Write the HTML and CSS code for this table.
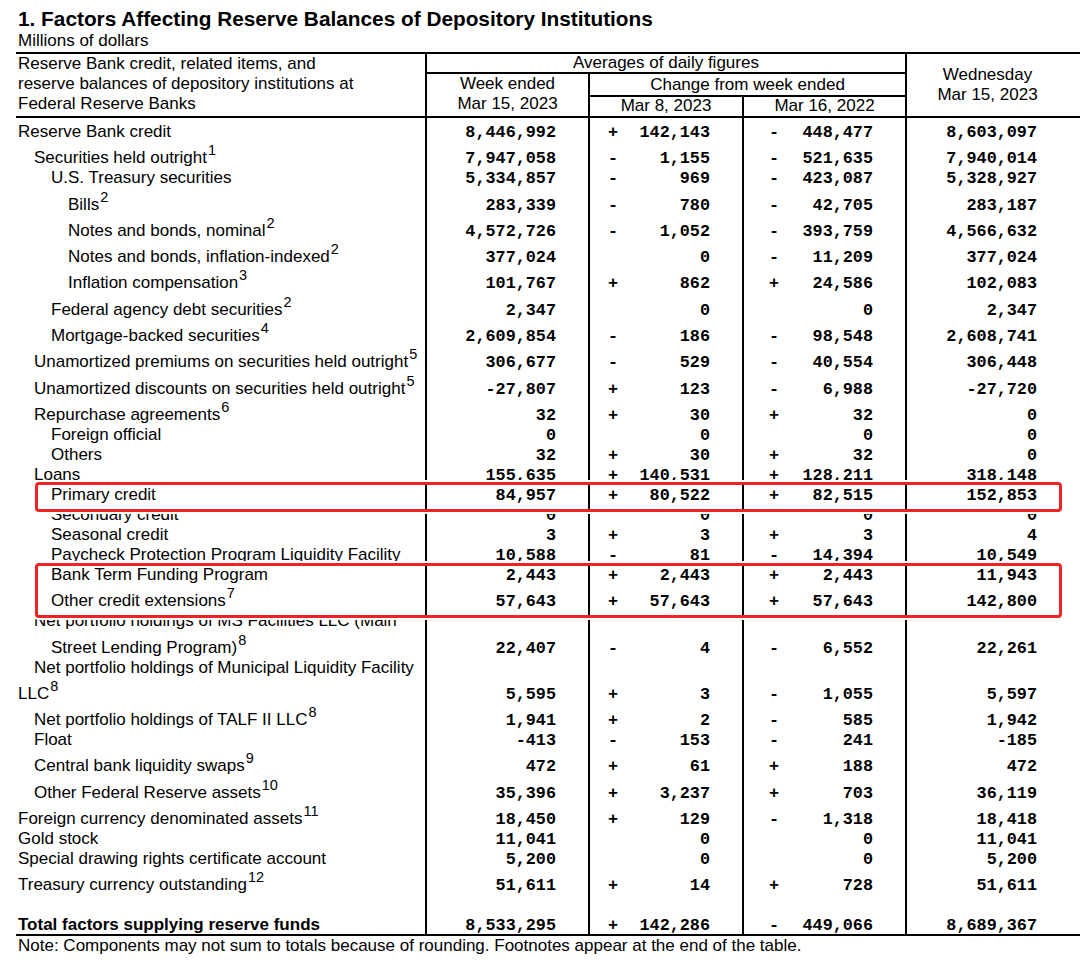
FILE: index.html
```html
<!DOCTYPE html>
<html lang="en">
<head>
<meta charset="utf-8">
<title>Factors Affecting Reserve Balances</title>
<link rel="stylesheet" href="styles.css">
</head>
<body>
<div class="page">
  <h1 class="title">1. Factors Affecting Reserve Balances of Depository Institutions</h1>
  <div class="units">Millions of dollars</div>
  <div class="table">
    <div class="thead">
      <div class="h-label">Reserve Bank credit, related items, and<br>reserve balances of depository institutions at<br>Federal Reserve Banks</div>
      <div class="h-avg">Averages of daily figures</div>
      <div class="h-week">Week ended<br>Mar 15, 2023</div>
      <div class="h-change">Change from week ended</div>
      <div class="h-mar8">Mar 8, 2023</div>
      <div class="h-mar16">Mar 16, 2022</div>
      <div class="h-wed"><span>Wednesday</span><span>Mar 15, 2023</span></div>
    </div>
    <div class="tbody">
      <div class="row first"><div class="lbl"><span>Reserve Bank credit</span></div><div class="c wk"><span>8,446,992</span></div><div class="c ch"><span>+</span><span>142,143</span></div><div class="c ch2"><span>-</span><span>448,477</span></div><div class="c wd"><span>8,603,097</span></div></div>
      <div class="row t"><div class="lbl l1"><span>Securities held outright<sup>1</sup></span></div><div class="c wk"><span>7,947,058</span></div><div class="c ch"><span>-</span><span>1,155</span></div><div class="c ch2"><span>-</span><span>521,635</span></div><div class="c wd"><span>7,940,014</span></div></div>
      <div class="row"><div class="lbl l2"><span>U.S. Treasury securities</span></div><div class="c wk"><span>5,334,857</span></div><div class="c ch"><span>-</span><span>969</span></div><div class="c ch2"><span>-</span><span>423,087</span></div><div class="c wd"><span>5,328,927</span></div></div>
      <div class="row t"><div class="lbl l3"><span>Bills<sup>2</sup></span></div><div class="c wk"><span>283,339</span></div><div class="c ch"><span>-</span><span>780</span></div><div class="c ch2"><span>-</span><span>42,705</span></div><div class="c wd"><span>283,187</span></div></div>
      <div class="row t"><div class="lbl l3"><span>Notes and bonds, nominal<sup>2</sup></span></div><div class="c wk"><span>4,572,726</span></div><div class="c ch"><span>-</span><span>1,052</span></div><div class="c ch2"><span>-</span><span>393,759</span></div><div class="c wd"><span>4,566,632</span></div></div>
      <div class="row t"><div class="lbl l3"><span>Notes and bonds, inflation-indexed<sup>2</sup></span></div><div class="c wk"><span>377,024</span></div><div class="c ch"><span></span><span>0</span></div><div class="c ch2"><span>-</span><span>11,209</span></div><div class="c wd"><span>377,024</span></div></div>
      <div class="row t"><div class="lbl l3"><span>Inflation compensation<sup>3</sup></span></div><div class="c wk"><span>101,767</span></div><div class="c ch"><span>+</span><span>862</span></div><div class="c ch2"><span>+</span><span>24,586</span></div><div class="c wd"><span>102,083</span></div></div>
      <div class="row t"><div class="lbl l2"><span>Federal agency debt securities<sup>2</sup></span></div><div class="c wk"><span>2,347</span></div><div class="c ch"><span></span><span>0</span></div><div class="c ch2"><span></span><span>0</span></div><div class="c wd"><span>2,347</span></div></div>
      <div class="row t"><div class="lbl l2"><span>Mortgage-backed securities<sup>4</sup></span></div><div class="c wk"><span>2,609,854</span></div><div class="c ch"><span>-</span><span>186</span></div><div class="c ch2"><span>-</span><span>98,548</span></div><div class="c wd"><span>2,608,741</span></div></div>
      <div class="row t"><div class="lbl l1"><span>Unamortized premiums on securities held outright<sup>5</sup></span></div><div class="c wk"><span>306,677</span></div><div class="c ch"><span>-</span><span>529</span></div><div class="c ch2"><span>-</span><span>40,554</span></div><div class="c wd"><span>306,448</span></div></div>
      <div class="row t"><div class="lbl l1"><span>Unamortized discounts on securities held outright<sup>5</sup></span></div><div class="c wk"><span>-27,807</span></div><div class="c ch"><span>+</span><span>123</span></div><div class="c ch2"><span>-</span><span>6,988</span></div><div class="c wd"><span>-27,720</span></div></div>
      <div class="row t"><div class="lbl l1"><span>Repurchase agreements<sup>6</sup></span></div><div class="c wk"><span>32</span></div><div class="c ch"><span>+</span><span>30</span></div><div class="c ch2"><span>+</span><span>32</span></div><div class="c wd"><span>0</span></div></div>
      <div class="row"><div class="lbl l2"><span>Foreign official</span></div><div class="c wk"><span>0</span></div><div class="c ch"><span></span><span>0</span></div><div class="c ch2"><span></span><span>0</span></div><div class="c wd"><span>0</span></div></div>
      <div class="row"><div class="lbl l2"><span>Others</span></div><div class="c wk"><span>32</span></div><div class="c ch"><span>+</span><span>30</span></div><div class="c ch2"><span>+</span><span>32</span></div><div class="c wd"><span>0</span></div></div>
      <div class="row"><div class="lbl l1"><span>Loans</span></div><div class="c wk"><span>155,635</span></div><div class="c ch"><span>+</span><span>140,531</span></div><div class="c ch2"><span>+</span><span>128,211</span></div><div class="c wd"><span>318,148</span></div></div>
      <div class="row hl hl-one"><div class="lbl l2"><span>Primary credit</span></div><div class="c wk"><span>84,957</span></div><div class="c ch"><span>+</span><span>80,522</span></div><div class="c ch2"><span>+</span><span>82,515</span></div><div class="c wd"><span>152,853</span></div></div>
      <div class="row"><div class="lbl l2"><span>Secondary credit</span></div><div class="c wk"><span>0</span></div><div class="c ch"><span></span><span>0</span></div><div class="c ch2"><span></span><span>0</span></div><div class="c wd"><span>0</span></div></div>
      <div class="row"><div class="lbl l2"><span>Seasonal credit</span></div><div class="c wk"><span>3</span></div><div class="c ch"><span>+</span><span>3</span></div><div class="c ch2"><span>+</span><span>3</span></div><div class="c wd"><span>4</span></div></div>
      <div class="row"><div class="lbl l2"><span>Paycheck Protection Program Liquidity Facility</span></div><div class="c wk"><span>10,588</span></div><div class="c ch"><span>-</span><span>81</span></div><div class="c ch2"><span>-</span><span>14,394</span></div><div class="c wd"><span>10,549</span></div></div>
      <div class="hl hl-two">
        <div class="row r-btfp"><div class="lbl l2"><span>Bank Term Funding Program</span></div><div class="c wk"><span>2,443</span></div><div class="c ch"><span>+</span><span>2,443</span></div><div class="c ch2"><span>+</span><span>2,443</span></div><div class="c wd"><span>11,943</span></div></div>
        <div class="row t r-other"><div class="lbl l2"><span>Other credit extensions<sup>7</sup></span></div><div class="c wk"><span>57,643</span></div><div class="c ch"><span>+</span><span>57,643</span></div><div class="c ch2"><span>+</span><span>57,643</span></div><div class="c wd"><span>142,800</span></div></div>
      </div>
      <div class="row"><div class="lbl l1"><span>Net portfolio holdings of MS Facilities LLC (Main</span></div><div class="c wk"></div><div class="c ch"></div><div class="c ch2"></div><div class="c wd"></div></div>
      <div class="row t"><div class="lbl l2"><span>Street Lending Program)<sup>8</sup></span></div><div class="c wk"><span>22,407</span></div><div class="c ch"><span>-</span><span>4</span></div><div class="c ch2"><span>-</span><span>6,552</span></div><div class="c wd"><span>22,261</span></div></div>
      <div class="row"><div class="lbl l1"><span>Net portfolio holdings of Municipal Liquidity Facility</span></div><div class="c wk"></div><div class="c ch"></div><div class="c ch2"></div><div class="c wd"></div></div>
      <div class="row t"><div class="lbl"><span>LLC<sup>8</sup></span></div><div class="c wk"><span>5,595</span></div><div class="c ch"><span>+</span><span>3</span></div><div class="c ch2"><span>-</span><span>1,055</span></div><div class="c wd"><span>5,597</span></div></div>
      <div class="row t"><div class="lbl l1"><span>Net portfolio holdings of TALF II LLC<sup>8</sup></span></div><div class="c wk"><span>1,941</span></div><div class="c ch"><span>+</span><span>2</span></div><div class="c ch2"><span>-</span><span>585</span></div><div class="c wd"><span>1,942</span></div></div>
      <div class="row"><div class="lbl l1"><span>Float</span></div><div class="c wk"><span>-413</span></div><div class="c ch"><span>-</span><span>153</span></div><div class="c ch2"><span>-</span><span>241</span></div><div class="c wd"><span>-185</span></div></div>
      <div class="row t"><div class="lbl l1"><span>Central bank liquidity swaps<sup>9</sup></span></div><div class="c wk"><span>472</span></div><div class="c ch"><span>+</span><span>61</span></div><div class="c ch2"><span>+</span><span>188</span></div><div class="c wd"><span>472</span></div></div>
      <div class="row t"><div class="lbl l1"><span>Other Federal Reserve assets<sup>10</sup></span></div><div class="c wk"><span>35,396</span></div><div class="c ch"><span>+</span><span>3,237</span></div><div class="c ch2"><span>+</span><span>703</span></div><div class="c wd"><span>36,119</span></div></div>
      <div class="row t"><div class="lbl"><span>Foreign currency denominated assets<sup>11</sup></span></div><div class="c wk"><span>18,450</span></div><div class="c ch"><span>+</span><span>129</span></div><div class="c ch2"><span>-</span><span>1,318</span></div><div class="c wd"><span>18,418</span></div></div>
      <div class="row"><div class="lbl"><span>Gold stock</span></div><div class="c wk"><span>11,041</span></div><div class="c ch"><span></span><span>0</span></div><div class="c ch2"><span></span><span>0</span></div><div class="c wd"><span>11,041</span></div></div>
      <div class="row"><div class="lbl"><span>Special drawing rights certificate account</span></div><div class="c wk"><span>5,200</span></div><div class="c ch"><span></span><span>0</span></div><div class="c ch2"><span></span><span>0</span></div><div class="c wd"><span>5,200</span></div></div>
      <div class="row t"><div class="lbl"><span>Treasury currency outstanding<sup>12</sup></span></div><div class="c wk"><span>51,611</span></div><div class="c ch"><span>+</span><span>14</span></div><div class="c ch2"><span>+</span><span>728</span></div><div class="c wd"><span>51,611</span></div></div>
      <div class="row"><div class="lbl"></div><div class="c wk"></div><div class="c ch"></div><div class="c ch2"></div><div class="c wd"></div></div>
      <div class="row total"><div class="lbl"><span>Total factors supplying reserve funds</span></div><div class="c wk"><span>8,533,295</span></div><div class="c ch"><span>+</span><span>142,286</span></div><div class="c ch2"><span>-</span><span>449,066</span></div><div class="c wd"><span>8,689,367</span></div></div>
    </div>
  </div>
  <div class="note">Note: Components may not sum to totals because of rounding. Footnotes appear at the end of the table.</div>
</div>
</body>
</html>
```

FILE: styles.css
```css
* { box-sizing: border-box; }
html, body { margin: 0; background: #fff; }
body {
  font-family: "Liberation Sans", Arial, sans-serif;
  font-size: 17px;
  color: #000;
}
.page {
  position: relative;
  width: 1080px;
  padding: 7px 0 0 16px;
}
.title {
  margin: 0;
  padding-left: 2px;
  font-size: 20.8px;
  line-height: 24px;
  font-weight: bold;
}
.units {
  padding-left: 2px;
  line-height: 20px;
  margin-bottom: 1px;
}
.table {
  width: 1064px;
  border-top: 2px solid #000;
  border-bottom: 2px solid #000;
}

/* header */
.thead {
  display: grid;
  grid-template-columns: 409px 163px 154px 163px 175px;
  grid-template-rows: 20px 23px 19px;
  border-bottom: 2px solid #000;
  line-height: 20px;
}
.h-label { grid-column: 1; grid-row: 1 / 4; padding-left: 2px; }
.h-avg {
  grid-column: 2 / 5; grid-row: 1;
  border-left: 2px solid #000; border-bottom: 2px solid #000;
  text-align: center; line-height: 18px;
}
.h-week {
  grid-column: 2; grid-row: 2 / 4;
  border-left: 2px solid #000;
  text-align: center;
}
.h-change {
  grid-column: 3 / 5; grid-row: 2;
  border-left: 2px solid #000; border-bottom: 2px solid #000;
  text-align: center; line-height: 21px;
}
.h-mar8, .h-mar16 {
  grid-row: 3;
  border-left: 2px solid #000;
  text-align: center; line-height: 17px;
}
.h-mar8 { grid-column: 3; }
.h-mar16 { grid-column: 4; }
.h-wed {
  grid-column: 5; grid-row: 1 / 4;
  border-left: 2px solid #000;
  display: flex; flex-direction: column; justify-content: center; align-items: center;
  padding-right: 12px;
}

/* body */
.row {
  display: grid;
  grid-template-columns: 409px 163px 154px 163px 175px;
  height: 20px;
}
.row.t { height: 26.3px; }
.row.first { height: 23px; }
.row > div {
  display: flex;
  align-items: flex-end;
  line-height: 20px;
  white-space: nowrap;
}
.row > div + div { border-left: 2px solid #000; }

.lbl { padding-left: 2px; }
.lbl.l1 { padding-left: 18px; }
.lbl.l2 { padding-left: 35px; }
.lbl.l3 { padding-left: 52px; }
.lbl > span { position: relative; top: 1px; }
.lbl sup {
  font-size: 14.5px;
  line-height: 0;
  vertical-align: baseline;
  position: relative;
  top: -8px;
  margin-left: 1px;
}
.total .lbl { font-weight: bold; }

.c {
  justify-content: flex-end;
  font-family: "Liberation Mono", "Courier New", monospace;
  font-weight: bold;
  font-size: 16.8px;
}
.c span { position: relative; top: 2px; }
.wk { padding-right: 32px; }
.ch { justify-content: space-between !important; padding-left: 18px; padding-right: 32px; }
.ch2 { justify-content: space-between !important; padding-left: 25px; padding-right: 32px; }
.wd { padding-right: 43px; }

/* highlight boxes */
.hl { position: relative; z-index: 1; background: #fff; }
.hl::after {
  content: "";
  position: absolute;
  left: 19px; right: 18px; top: 0; bottom: 0;
  border: 3px solid #ee2424;
  border-radius: 4px;
  box-shadow: 0 0 0 2px #fff;
  pointer-events: none;
}
.row.hl-one {
  height: 30px;
  margin: -2px 0 -8px;
}
.row.hl-one > div { padding-top: 2px; padding-bottom: 8px; }
.hl-two { margin: -1px 0 -8px; }
.row.r-btfp { height: 21px; }
.row.r-other { height: 34.3px; }
.row.r-other > div { padding-bottom: 8px; }

.note {
  padding-left: 2px;
  line-height: 20px;
}
```
